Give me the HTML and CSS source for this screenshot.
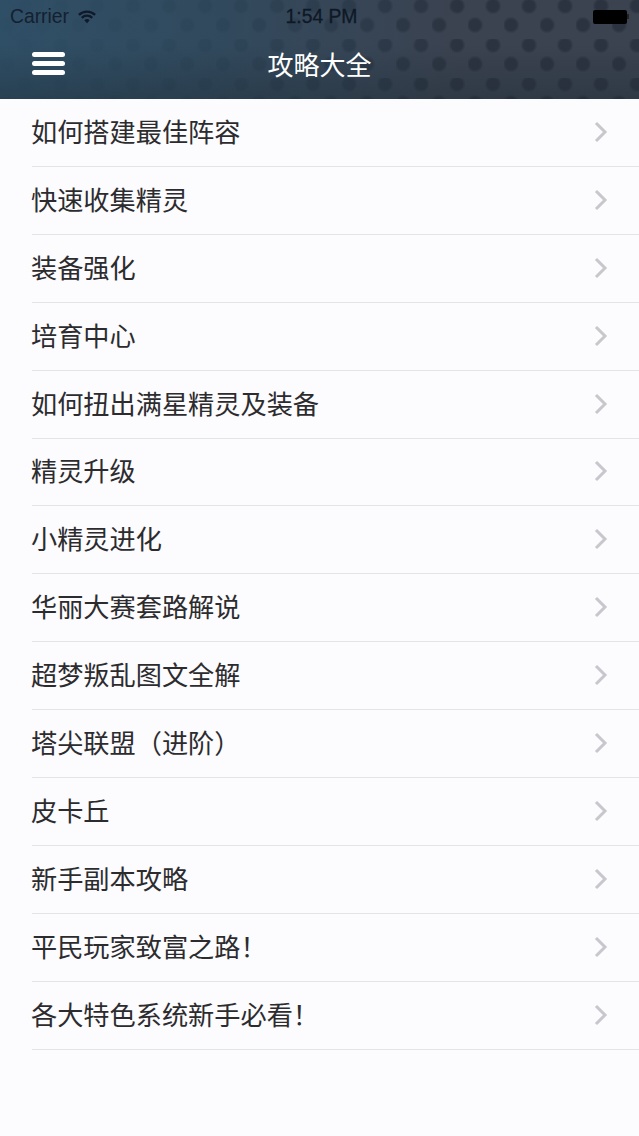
FILE: index.html
```html
<!DOCTYPE html>
<html lang="zh-CN">
<head>
    <meta charset="UTF-8">
    <meta name="viewport" content="width=device-width, initial-scale=1.0">
    <title>攻略大全</title>
    <link rel="stylesheet" href="styles.css">
</head>
<body>
    <header class="top-bar">
        <div class="status-bar">
            <div class="status-left">
                <span>Carrier</span>
                <svg class="wifi" width="18" height="14" viewBox="0 0 20 15">
                    <path d="M1 5.2a12.8 12.8 0 0 1 18 0" />
                    <path d="M4.2 8.4a8.3 8.3 0 0 1 11.6 0" />
                    <path class="wifi-dot" d="M10 14.5l-3-3.4a4.3 4.3 0 0 1 6 0z" />
                </svg>
            </div>
            <span class="status-time">1:54 PM</span>
            <div class="status-right">
                <div class="battery"></div>
                <div class="battery-tip"></div>
            </div>
        </div>
        <div class="nav-bar">
            <div class="menu-btn">
                <span></span>
                <span></span>
                <span></span>
            </div>
            <h1 class="nav-title">攻略大全</h1>
        </div>
    </header>

    <ul class="guide-list">
        <li class="guide-item"><span>如何搭建最佳阵容</span><svg class="chevron" viewBox="0 0 14 22"><path d="M2 2l9 9-9 9" /></svg></li>
        <li class="guide-item"><span>快速收集精灵</span><svg class="chevron" viewBox="0 0 14 22"><path d="M2 2l9 9-9 9" /></svg></li>
        <li class="guide-item"><span>装备强化</span><svg class="chevron" viewBox="0 0 14 22"><path d="M2 2l9 9-9 9" /></svg></li>
        <li class="guide-item"><span>培育中心</span><svg class="chevron" viewBox="0 0 14 22"><path d="M2 2l9 9-9 9" /></svg></li>
        <li class="guide-item"><span>如何扭出满星精灵及装备</span><svg class="chevron" viewBox="0 0 14 22"><path d="M2 2l9 9-9 9" /></svg></li>
        <li class="guide-item"><span>精灵升级</span><svg class="chevron" viewBox="0 0 14 22"><path d="M2 2l9 9-9 9" /></svg></li>
        <li class="guide-item"><span>小精灵进化</span><svg class="chevron" viewBox="0 0 14 22"><path d="M2 2l9 9-9 9" /></svg></li>
        <li class="guide-item"><span>华丽大赛套路解说</span><svg class="chevron" viewBox="0 0 14 22"><path d="M2 2l9 9-9 9" /></svg></li>
        <li class="guide-item"><span>超梦叛乱图文全解</span><svg class="chevron" viewBox="0 0 14 22"><path d="M2 2l9 9-9 9" /></svg></li>
        <li class="guide-item"><span>塔尖联盟（进阶）</span><svg class="chevron" viewBox="0 0 14 22"><path d="M2 2l9 9-9 9" /></svg></li>
        <li class="guide-item"><span>皮卡丘</span><svg class="chevron" viewBox="0 0 14 22"><path d="M2 2l9 9-9 9" /></svg></li>
        <li class="guide-item"><span>新手副本攻略</span><svg class="chevron" viewBox="0 0 14 22"><path d="M2 2l9 9-9 9" /></svg></li>
        <li class="guide-item"><span>平民玩家致富之路！</span><svg class="chevron" viewBox="0 0 14 22"><path d="M2 2l9 9-9 9" /></svg></li>
        <li class="guide-item"><span>各大特色系统新手必看！</span><svg class="chevron" viewBox="0 0 14 22"><path d="M2 2l9 9-9 9" /></svg></li>
    </ul>
</body>
</html>
```

FILE: styles.css
```css
* {
    box-sizing: border-box;
}

body {
    margin: 0;
    height: 1136px;
    overflow: hidden;
    background: #fcfbfe;
    color: #2c2c2e;
    font-family: "Liberation Sans", "Noto Sans CJK SC", sans-serif;
}

/* header: soft dotted texture under a blue wash that fades to the right */
.top-bar {
    height: 99px;
    background-color: #3b4250;
    background-image:
        linear-gradient(180deg, rgba(30, 40, 52, 0) 45%, rgba(30, 44, 54, 0.4) 100%),
        linear-gradient(90deg, rgba(46, 80, 104, 0.92) 0%, rgba(46, 76, 98, 0.72) 35%, rgba(58, 66, 78, 0) 72%),
        radial-gradient(circle at 7px 25px, #2c3340 5.5px, rgba(44, 51, 64, 0) 8.5px),
        radial-gradient(circle at 25px 6px, #2c3340 5.5px, rgba(44, 51, 64, 0) 8.5px);
    background-size: 100% 100%, 100% 100%, 36px 39px, 36px 39px;
}

.status-bar {
    height: 33px;
    padding: 0 10px;
    display: grid;
    grid-template-columns: 1fr auto 1fr;
    align-items: center;
    font-size: 19.3px;
    color: #142030;
}

.status-left {
    display: flex;
    align-items: center;
    gap: 9px;
}

.wifi path {
    fill: none;
    stroke: #10192a;
    stroke-width: 2.6;
}

.wifi .wifi-dot {
    fill: #10192a;
    stroke: none;
}

.status-time {
    margin-left: 4px;
    color: #0e1826;
    -webkit-text-stroke: 0.3px #0e1826;
}

.status-right {
    display: flex;
    justify-content: flex-end;
    align-items: center;
}

.battery {
    width: 34px;
    height: 14px;
    background: #000;
    border-radius: 2px;
}

.battery-tip {
    width: 2px;
    height: 5px;
    background: #222;
}

.nav-bar {
    position: relative;
    height: 66px;
    padding-bottom: 6px;
    display: flex;
    justify-content: center;
    align-items: center;
}

.nav-title {
    margin: 0;
    font-size: 26px;
    font-weight: 400;
    color: #fff;
}

.menu-btn {
    position: absolute;
    left: 32px;
    top: 19px;
    width: 33px;
    display: flex;
    flex-direction: column;
    gap: 4px;
}

.menu-btn span {
    height: 5px;
    background: #fff;
    border-radius: 3px;
}

.guide-list {
    list-style: none;
    margin: 0;
    padding: 0 0 0 32px;
}

.guide-item {
    height: 67.92px;
    padding: 0 31px 3px 0;
    display: flex;
    justify-content: space-between;
    align-items: center;
    border-bottom: 1px solid #e4e3e6;
    font-size: 26.2px;
}

.guide-item span {
    margin-left: -1px;
}

.chevron {
    width: 14px;
    height: 22px;
    margin-top: 2px;
}

.chevron path {
    fill: none;
    stroke: #c7c7cc;
    stroke-width: 3;
}
```
